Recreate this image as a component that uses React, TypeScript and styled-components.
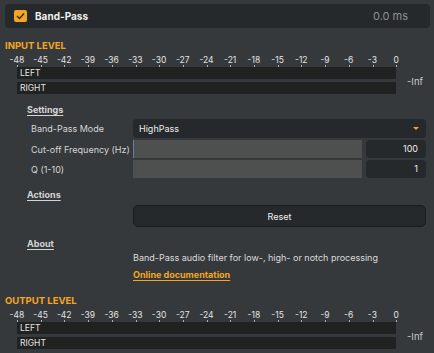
import React from "react";
import styled, { createGlobalStyle } from "styled-components";

const ORANGE = "#f5a524";
const SCALE = [-48, -45, -42, -39, -36, -33, -30, -27, -24, -21, -18, -15, -12, -9, -6, -3, 0];

const GlobalStyle = createGlobalStyle`
  html, body {
    margin: 0;
    padding: 0;
    background: #35393c;
  }
  body {
    font-family: Inter, "Liberation Sans", sans-serif;
    color: #d8d8d8;
  }
`;

const Root = styled.div`
  width: 434px;
  height: 353px;
  box-sizing: border-box;
  padding: 4px 4px 0 5px;
  overflow: hidden;
`;

const HeaderBar = styled.div`
  display: flex;
  align-items: center;
  height: 24px;
  width: 425px;
  box-sizing: border-box;
  padding: 0 22px 0 9px;
  background: #26292b;
  border-radius: 4px;
`;

const CheckBox = styled.div`
  width: 13px;
  height: 12px;
  border-radius: 2px;
  background: ${ORANGE};
  display: flex;
  align-items: center;
  justify-content: center;
`;

const Title = styled.div`
  margin-left: 8px;
  font-size: 10px;
  font-weight: 700;
  color: #f0f0f0;
`;

const Timing = styled.div`
  margin-left: auto;
  font-size: 11px;
  color: #8d9193;
`;

const LevelTitle = styled.div<{ $top: number }>`
  margin-top: ${({ $top }) => $top}px;
  height: 12px;
  line-height: 14px;
  font-size: 9.5px;
  font-weight: 700;
  color: ${ORANGE};
`;

const ScaleRow = styled.div`
  display: flex;
  justify-content: space-between;
  width: 403px;
  margin-top: 5px;
`;

const ScaleMark = styled.div`
  width: 24px;
  height: 11px;
  text-align: center;
  font-size: 8.5px;
  line-height: 9px;
  color: #e2e2e2;
  position: relative;
  &::after {
    content: "";
    position: absolute;
    left: 12px;
    bottom: 0;
    width: 1px;
    height: 2px;
    background: #b0b0b0;
  }
`;

const MeterRow = styled.div`
  display: flex;
  align-items: center;
  margin-left: 12px;
`;

const Bars = styled.div`
  display: flex;
  flex-direction: column;
  gap: 3px;
  width: 379px;
`;

const Bar = styled.div`
  height: 12px;
  background: #202121;
  font-size: 8.5px;
  line-height: 13px;
  padding-left: 3px;
  color: #e6e6e6;
`;

const Inf = styled.div`
  margin-left: 11px;
  margin-top: 2px;
  font-size: 9.5px;
  color: #c8c8c8;
`;

const Section = styled.div`
  display: flex;
  flex-direction: column;
`;

const SectionTitle = styled.div<{ $top: number }>`
  align-self: flex-start;
  margin: ${({ $top }) => $top}px 0 0 22px;
  font-size: 9px;
  font-weight: 700;
  line-height: 11px;
  color: #d4d4d4;
  text-decoration: underline;
  text-underline-offset: 2px;
`;

const ParamGrid = styled.div`
  display: grid;
  grid-template-columns: 102px 293px;
  grid-template-rows: 19px 18px 18px;
  row-gap: 2px;
  margin: 4px 0 0 26px;
  align-items: center;
`;

const ParamLabel = styled.div`
  font-size: 9px;
  white-space: nowrap;
  color: #d6d6d6;
`;

const Select = styled.div`
  height: 19px;
  display: flex;
  align-items: center;
  padding: 0 7px 0 6px;
  background: #26292b;
  border-radius: 4px;
  font-size: 9px;
  color: #ececec;
`;

const Caret = styled.div`
  margin-left: auto;
  width: 0;
  height: 0;
  border-left: 3px solid transparent;
  border-right: 3px solid transparent;
  border-top: 3px solid ${ORANGE};
`;

const SliderLine = styled.div`
  display: flex;
  gap: 4px;
  height: 18px;
`;

const Track = styled.div<{ $focus?: boolean }>`
  flex: 1;
  background: #4e4f4f;
  border-left: 1px solid ${({ $focus }) => ($focus ? "#5d7fb0" : "#4e4f4f")};
`;

const ValueBox = styled.div`
  width: 60px;
  box-sizing: border-box;
  padding-right: 8px;
  background: #26292b;
  border-radius: 4px;
  text-align: right;
  font-size: 9px;
  line-height: 18px;
  color: #ececec;
`;

const ButtonRow = styled.div`
  margin: 5px 0 0 128px;
  width: 293px;
`;

const ResetButton = styled.div`
  height: 22px;
  box-sizing: border-box;
  border: 1px solid #1a1c1d;
  border-radius: 5px;
  background: #26292b;
  display: flex;
  align-items: center;
  justify-content: center;
  font-size: 9px;
  color: #f0f0f0;
`;

const About = styled.div`
  margin: 3px 0 0 128px;
  display: flex;
  flex-direction: column;
  align-items: flex-start;
  gap: 6px;
`;

const Description = styled.div`
  font-size: 9px;
  line-height: 11px;
  color: #dcdcdc;
`;

const DocLink = styled.a`
  font-size: 9px;
  line-height: 11px;
  font-weight: 700;
  color: ${ORANGE};
  text-decoration: underline;
  text-underline-offset: 2px;
`;

const Meter = ({ title, top }: { title: string; top: number }) => (
  <>
    <LevelTitle $top={top}>{title}</LevelTitle>
    <ScaleRow>
      {SCALE.map((v) => (
        <ScaleMark key={v}>{v}</ScaleMark>
      ))}
    </ScaleRow>
    <MeterRow>
      <Bars>
        <Bar>LEFT</Bar>
        <Bar>RIGHT</Bar>
      </Bars>
      <Inf>-Inf</Inf>
    </MeterRow>
  </>
);

export default function App() {
  return (
    <Root>
      <GlobalStyle />
      <HeaderBar>
        <CheckBox>
          <svg width="9" height="8" viewBox="0 0 9 8">
            <polyline points="1,4 3.5,6.5 8,1.5" fill="none" stroke="#2a2a2a" strokeWidth="1.4" />
          </svg>
        </CheckBox>
        <Title>Band-Pass</Title>
        <Timing>0.0 ms</Timing>
      </HeaderBar>

      <Meter title="INPUT LEVEL" top={11} />

      <Section>
        <SectionTitle $top={10}>Settings</SectionTitle>
        <ParamGrid>
          <ParamLabel>Band-Pass Mode</ParamLabel>
          <Select>
            HighPass
            <Caret />
          </Select>
          <ParamLabel>Cut-off Frequency (Hz)</ParamLabel>
          <SliderLine>
            <Track $focus />
            <ValueBox>100</ValueBox>
          </SliderLine>
          <ParamLabel>Q (1-10)</ParamLabel>
          <SliderLine>
            <Track />
            <ValueBox>1</ValueBox>
          </SliderLine>
        </ParamGrid>
      </Section>

      <Section>
        <SectionTitle $top={11}>Actions</SectionTitle>
        <ButtonRow>
          <ResetButton>Reset</ResetButton>
        </ButtonRow>
      </Section>

      <Section>
        <SectionTitle $top={11}>About</SectionTitle>
        <About>
          <Description>Band-Pass audio filter for low-, high- or notch processing</Description>
          <DocLink href="#">Online documentation</DocLink>
        </About>
      </Section>

      <Meter title="OUTPUT LEVEL" top={14} />
    </Root>
  );
}
